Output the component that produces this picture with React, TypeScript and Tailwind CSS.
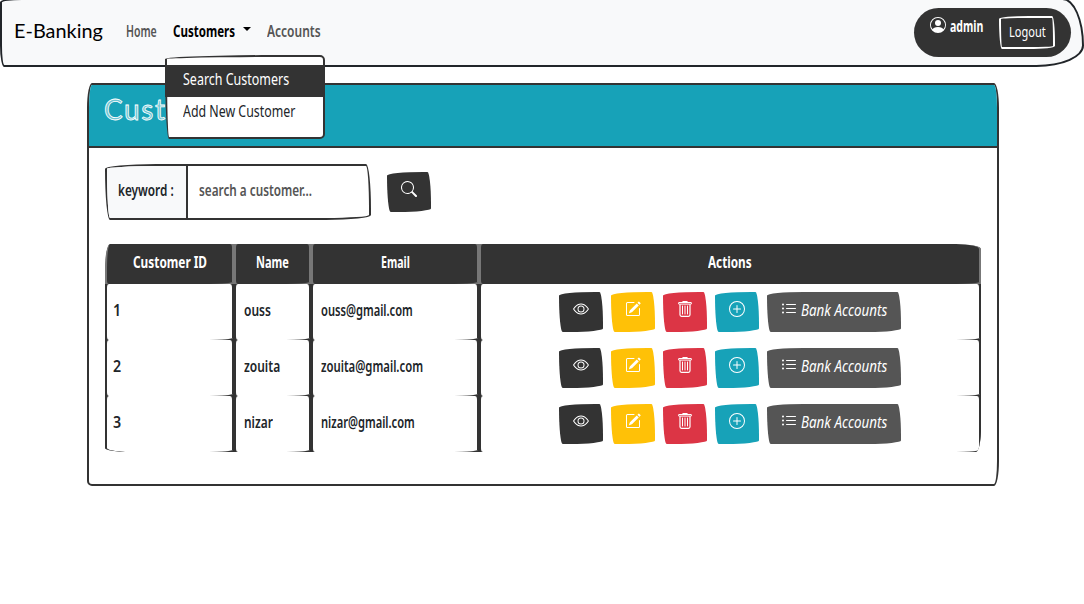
import { useLayoutEffect, useRef, useState, type ReactNode } from 'react';
import { BsEye, BsListUl, BsPencilSquare, BsPersonCircle, BsPlusCircle, BsSearch } from 'react-icons/bs';

/** Condenses its text horizontally so that it fills exactly `width` pixels. */
function Fit({ width, children, className = '' }: { width: number; children: ReactNode; className?: string }) {
  const ref = useRef<HTMLSpanElement>(null);
  const [scale, setScale] = useState(1);
  useLayoutEffect(() => {
    if (ref.current) setScale(width / ref.current.offsetWidth);
  }, [width]);
  return (
    <span className="inline-block shrink-0 whitespace-nowrap text-left" style={{ width }}>
      <span
        ref={ref}
        className={`inline-block origin-left ${className}`}
        style={{ transform: `scaleX(${scale})` }}
      >
        {children}
      </span>
    </span>
  );
}

function TrashIcon() {
  return (
    <svg viewBox="0 0 16 16" className="size-4" fill="none" stroke="currentColor" strokeWidth="1">
      <path d="M5.5 1.5V.9q0-.4.4-.4h4.2q.4 0 .4.4v.6" />
      <rect x="1.5" y="1.5" width="13" height="1.6" rx=".4" />
      <path d="M3 3.2v10.6q0 1.5 1.5 1.5h7q1.5 0 1.5-1.5V3.2" strokeWidth="1.2" />
      <path d="M5.5 5v8M8 5v8M10.5 5v8" strokeLinecap="round" />
    </svg>
  );
}

const btn =
  'flex h-10 shrink-0 justify-center pt-[9px] text-white [border-radius:255px_25px_225px_25px/25px_225px_25px_255px]';

const customers = [
  { id: 1, name: 'ouss', nameW: 27, email: 'ouss@gmail.com', emailW: 92 },
  { id: 2, name: 'zouita', nameW: 36, email: 'zouita@gmail.com', emailW: 102 },
  { id: 3, name: 'nizar', nameW: 29, email: 'nizar@gmail.com', emailW: 94 },
];

const headers = [
  { label: 'Customer ID', w: 74 },
  { label: 'Name', w: 33 },
  { label: 'Email', w: 29 },
  { label: 'Actions', w: 44 },
];

const grid = 'grid grid-cols-[129px_77px_168px_502px]';

function Navbar() {
  return (
    <nav className="-mt-0.5 flex h-[69px] items-start border-2 border-[#212529] bg-[#f8f9fa] pt-0.5 pl-3 [border-radius:25px_25px_55px_5px/5px_55px_25px_25px]">
      <div className="mt-[15px] flex h-7 items-center font-[Lato] text-[19px] text-black">
        <Fit width={89}>E-Banking</Fit>
      </div>
      <div className="mt-[17px] ml-[23px] flex h-6 items-center text-[#555]">
        <Fit width={31} className="font-semibold">Home</Fit>
        <div className="relative ml-4 flex items-center font-bold text-black">
          <Fit width={62}>Customers</Fit>
          <span className="mb-1 ml-2 border-x-[4.5px] border-t-[4.5px] border-x-transparent border-t-black" />
          <div className="absolute top-[36px] -left-2 z-10 h-[84px] w-40 border-2 border-[#333] bg-white pt-2 text-base font-normal text-[#212529] [border-radius:120px_5px_5px_4px/4px_5px_5px_75px]">
            <div className="-ml-0.5 flex h-8 items-center bg-[#333] pb-1 pl-[18px] text-white">
              <Fit width={106}>Search Customers</Fit>
            </div>
            <div className="flex h-8 items-center pb-1 pl-4">
              <Fit width={112}>Add New Customer</Fit>
            </div>
          </div>
        </div>
        <div className="ml-4 flex items-center">
          <Fit width={54} className="font-semibold">Accounts</Fit>
        </div>
      </div>
      <div className="mt-1.5 mr-[11px] ml-auto flex h-[49px] w-[157px] rounded-[25px] bg-[#333] pl-4 text-white">
        <BsPersonCircle className="mt-[9px] size-4" />
        <div className="mt-1.5 ml-1 font-bold">
          <Fit width={33}>admin</Fit>
        </div>
        <div className="mt-2 ml-4 flex h-[33px] w-14 items-center justify-center border-2 border-white pb-0.5 text-[14px] [border-radius:255px_25px_225px_25px/25px_225px_25px_255px]">
          <Fit width={37}>Logout</Fit>
        </div>
      </div>
    </nav>
  );
}

export default function App() {
  return (
    <div className="flow-root min-h-[604px] bg-white font-['Noto_Sans',sans-serif] text-base text-[#212529]">
      <Navbar />
      <main className="mt-4 ml-[87px] h-[403px] w-[912px] overflow-hidden border-2 border-[#333] bg-white [border-radius:5px_5px_5px_5px/25px_25px_25px_5px]">
        <header className="h-[63px] border-b-2 border-[#333] bg-[#17a2b8] pt-1 pl-[15px]">
          <h1 className="font-[Lato] text-[28px] leading-10 tracking-[1.6px] text-white/40 [-webkit-text-stroke:0.8px_white]">
            Customers
          </h1>
        </header>

        <div className="pt-4 pl-4">
          <form className="flex">
            <div className="flex h-14 w-[266px] overflow-hidden border-2 border-[#333] [border-radius:255px_25px_225px_25px/25px_225px_25px_255px]">
              <label className="flex w-[81px] items-center border-r-2 border-[#333] bg-[#f8f9fa] pb-1 pl-[11px] font-semibold">
                <Fit width={56}>keyword :</Fit>
              </label>
              <div className="flex items-center pb-1 pl-[11px] text-[#555]">
                <Fit width={113} className="font-semibold">search a customer...</Fit>
              </div>
            </div>
            <button type="button" className={`${btn} mt-2 ml-4 w-11 bg-[#333]`}>
              <BsSearch className="size-4" />
            </button>
          </form>

          <div className="mt-6 w-[876px]">
            <div className={`${grid} h-10 overflow-hidden bg-[#777] font-bold text-white [border-radius:5px_25px_0_0/25px_5px_0_0]`}>
              {headers.map((h) => (
                <div
                  key={h.label}
                  className="flex items-center justify-center border-x-2 border-[#777] bg-[#333] pb-1 [border-radius:4px_4px_25px_4px/4px_4px_2px_4px] first:[border-radius:5px_4px_25px_4px/25px_4px_2px_4px] last:[border-radius:4px_25px_25px_4px/4px_5px_2px_4px]"
                >
                  <Fit width={h.w}>{h.label}</Fit>
                </div>
              ))}
            </div>
            {customers.map((c) => (
              <div
                key={c.id}
                className={`${grid} h-14 overflow-hidden bg-[#333] font-semibold *:border-x-2 *:border-[#333] *:bg-white *:[border-radius:4px_4px_25px_4px/4px_4px_2px_4px] last:[border-radius:0_0_5px_25px/0_0_25px_4px] last:*:first:[border-radius:4px_4px_25px_25px/4px_4px_2px_4px]`}
              >
                <div className="flex items-center pb-1 pl-1.5">
                  <Fit width={8}>{c.id}</Fit>
                </div>
                <div className="flex items-center pb-1 pl-2">
                  <Fit width={c.nameW}>{c.name}</Fit>
                </div>
                <div className="flex items-center pb-1 pl-2">
                  <Fit width={c.emailW}>{c.email}</Fit>
                </div>
                <div className="flex items-center justify-center gap-2">
                  <button type="button" className={`${btn} w-11 bg-[#333]`}>
                    <BsEye className="size-4" />
                  </button>
                  <button type="button" className={`${btn} w-11 bg-[#ffc107]`}>
                    <BsPencilSquare className="size-4" />
                  </button>
                  <button type="button" className={`${btn} w-11 bg-[#dc3545]`}>
                    <TrashIcon />
                  </button>
                  <button type="button" className={`${btn} w-11 bg-[#17a2b8]`}>
                    <BsPlusCircle className="size-4" />
                  </button>
                  <button type="button" className={`${btn} w-[134px] bg-[#555]`}>
                    <BsListUl className="size-4" />
                    <span className="ml-1 -mt-[3px] font-normal italic">
                      <Fit width={86}>Bank Accounts</Fit>
                    </span>
                  </button>
                </div>
              </div>
            ))}
          </div>
        </div>
      </main>
    </div>
  );
}
